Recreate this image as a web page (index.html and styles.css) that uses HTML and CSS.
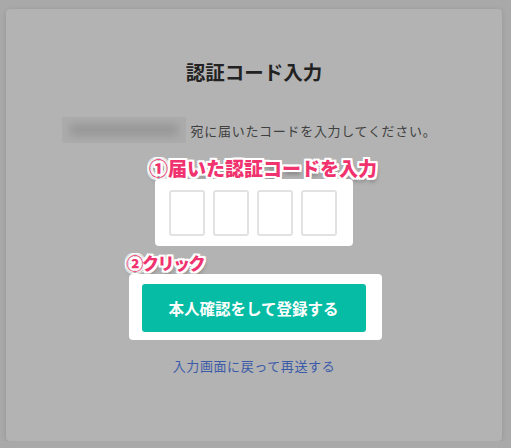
FILE: index.html
```html
<!DOCTYPE html>
<html lang="ja">
<head>
    <meta charset="UTF-8">
    <meta name="viewport" content="width=device-width, initial-scale=1.0">
    <title>認証コード入力</title>
    <link rel="stylesheet" href="styles.css">
</head>
<body>
    <div class="card">
        <h1 class="title">認証コード入力</h1>
        <p class="lead">
            <span class="masked"><span class="masked-blur"></span></span>
            <span>宛に届いたコードを入力してください。</span>
        </p>

        <div class="step step-code">
            <div class="note">①届いた認証コードを入力</div>
            <div class="panel panel-code">
                <input class="digit" type="text" maxlength="1">
                <input class="digit" type="text" maxlength="1">
                <input class="digit" type="text" maxlength="1">
                <input class="digit" type="text" maxlength="1">
            </div>
        </div>

        <div class="step step-submit">
            <div class="note">②クリック</div>
            <div class="panel panel-submit">
                <button class="submit">本人確認をして登録する</button>
            </div>
        </div>

        <a class="resend" href="#">入力画面に戻って再送する</a>
    </div>
</body>
</html>
```

FILE: styles.css
```css
body {
    margin: 0;
    background-color: #a9a9a9;
    font-family: "Noto Sans CJK JP", "Noto Sans", sans-serif;
    color: #3a3a3a;
}
.card {
    box-sizing: border-box;
    width: 496px;
    height: 432px;
    margin: 9px 0 0 6px;
    padding-top: 48px;
    background-color: #b3b3b3;
    border-radius: 4px;
    box-shadow: 0 1px 5px rgba(0, 0, 0, 0.12);
    display: flex;
    flex-direction: column;
    align-items: center;
}
.title {
    margin: 0;
    font-size: 19.5px;
    line-height: 30px;
    font-weight: 700;
    color: #222;
}
.lead {
    margin: 30px 0 0 -10px;
    display: flex;
    align-items: center;
    gap: 5px;
    font-size: 13px;
    letter-spacing: 0.7px;
    color: #404040;
    height: 26px;
}
.masked {
    display: block;
    position: relative;
    width: 124px;
    height: 26px;
    background-color: #acacac;
    overflow: hidden;
}
.masked-blur {
    position: absolute;
    left: 8px;
    top: 7px;
    width: 108px;
    height: 12px;
    background-color: #979797;
    filter: blur(4px);
}
.step {
    display: flex;
    flex-direction: column;
    align-items: flex-start;
}
.step-code {
    margin-top: 14px;
}
.step-submit {
    margin-top: 6px;
    margin-left: 2px;
}
.note {
    width: 0;
    font-size: 19px;
    line-height: 22px;
    font-weight: 900;
    color: #f0336e;
    white-space: nowrap;
    text-shadow:
        2px 0 0 #fff, -2px 0 0 #fff, 0 2px 0 #fff, 0 -2px 0 #fff,
        2px 2px 0 #fff, -2px -2px 0 #fff, 2px -2px 0 #fff, -2px 2px 0 #fff,
        1px 4px 4px rgba(0, 0, 0, 0.35);
}
.step-code .note {
    margin-left: -6px;
}
.step-submit .note {
    margin-left: -2px;
    font-size: 17px;
    letter-spacing: -1.5px;
}
.panel {
    background-color: #fff;
    border-radius: 4px;
    display: flex;
}
.panel-code {
    padding: 11px 16px 10px 14px;
    gap: 8px;
}
.digit {
    box-sizing: border-box;
    width: 36px;
    height: 46px;
    margin: 0;
    border: 2px solid #e2e2e2;
    border-radius: 3px;
    background-color: #fff;
}
.panel-submit {
    padding: 10px 16px 8px 13px;
}
.submit {
    width: 224px;
    height: 48px;
    border: none;
    border-radius: 3px;
    background-color: #07bca4;
    color: #fff;
    font-family: inherit;
    font-size: 15.5px;
    font-weight: 700;
    cursor: pointer;
}
.resend {
    margin-top: 16px;
    font-size: 13px;
    line-height: 20px;
    letter-spacing: 0.6px;
    color: #3b5ba9;
    text-decoration: none;
}
```
